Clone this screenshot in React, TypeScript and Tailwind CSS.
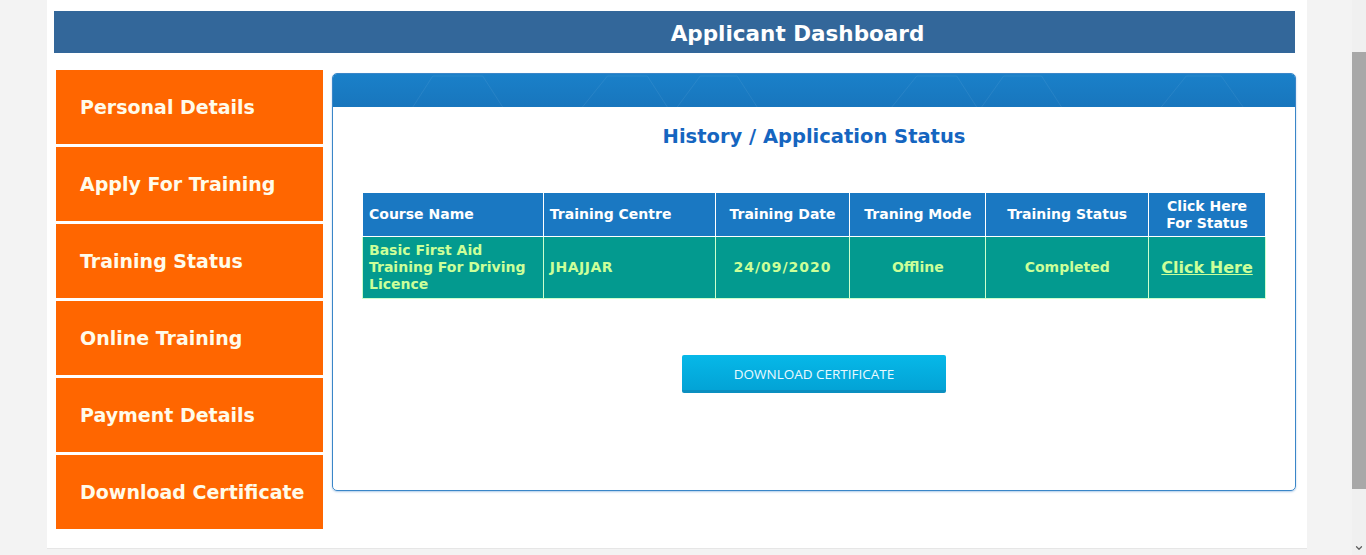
import { ChevronDown } from 'lucide-react'

const menu = [
  'Personal Details',
  'Apply For Training',
  'Training Status',
  'Online Training',
  'Payment Details',
  'Download Certificate',
]

function PanelPattern() {
  // faint hexagon-ish lines in the panel header
  return (
    <svg className="absolute inset-0 h-full w-full" preserveAspectRatio="none" viewBox="0 0 964 33">
      <g fill="none" stroke="#ffffff" strokeOpacity="0.07" strokeWidth="1">
        <path d="M80 33 L100 2 L150 2 L170 33" />
        <path d="M250 33 L275 2 L315 2 L335 33" />
        <path d="M345 33 L368 2 L405 2 L425 33" />
        <path d="M560 33 L585 2 L625 2 L645 33" />
        <path d="M650 33 L672 2 L710 2 L730 33" />
        <path d="M830 33 L855 2 L890 2 L912 33" />
      </g>
    </svg>
  )
}

export default function App() {
  return (
    <div className="flex h-[555px] w-[1366px] overflow-hidden bg-[#f3f3f3] font-['DejaVu_Sans',sans-serif]">
      <div className="ml-[47px] h-[549px] w-[1260px] border-b border-[#e6e6e6] bg-white pl-[7px] pt-[11px]">
        <div className="flex h-[42px] w-[1241px] items-center justify-center bg-[#33679a] pl-[246px] pt-[4px] text-[21.5px] font-bold text-white">
          Applicant Dashboard
        </div>

        <div className="mt-[17px] flex">
          <div className="ml-[2px] flex w-[267px] flex-col gap-[3px]">
            {menu.map(item => (
              <div
                key={item}
                className="flex h-[74px] items-center bg-[#ff6600] pl-[24px] text-[19px] font-bold text-[#fffbea]"
              >
                {item}
              </div>
            ))}
          </div>

          <div className="ml-[9px] mt-[3px] h-[418px] w-[964px] rounded-[5px] border border-[#3a86c8] shadow-[0_1px_2px_rgba(60,130,200,0.4)]">
            <div className="relative h-[33px] rounded-t-[4px] bg-gradient-to-b from-[#1a80c9] to-[#1876bd]">
              <PanelPattern />
            </div>
            <div className="flex flex-col items-center">
              <h2 className="mt-[15px] text-[19.5px] font-bold text-[#1565c0]">History / Application Status</h2>

              <table className="mt-[41px] w-[904px] border-collapse text-[14px] font-bold">
                <thead>
                  <tr className="h-[44px] bg-[#1a78c2] text-white">
                    <th className="w-[181px] border border-white px-[6px] text-left">Course Name</th>
                    <th className="w-[172px] border border-white px-[6px] text-left">Training Centre</th>
                    <th className="w-[135px] border border-white text-center">Training Date</th>
                    <th className="w-[136px] border border-white text-center">Traning Mode</th>
                    <th className="w-[163px] border border-white text-center">Training Status</th>
                    <th className="w-[117px] border border-white text-center leading-[17px]">
                      Click Here
                      <br />
                      For Status
                    </th>
                  </tr>
                </thead>
                <tbody>
                  <tr className="h-[62px] bg-[#039a8f] pt-[2px] text-[#ccff99]">
                    <td className="border border-[#ccffcc] px-[6px] leading-[17px]">
                      Basic First Aid Training For Driving Licence
                    </td>
                    <td className="border border-[#ccffcc] px-[6px] tracking-[0.5px]">JHAJJAR</td>
                    <td className="border border-[#ccffcc] text-center tracking-[1px]">24/09/2020</td>
                    <td className="border border-[#ccffcc] text-center">Offline</td>
                    <td className="border border-[#ccffcc] text-center">Completed</td>
                    <td className="border border-[#ccffcc] text-center">
                      <a className="text-[16px] underline">Click Here</a>
                    </td>
                  </tr>
                </tbody>
              </table>

              <button className="mt-[56px] h-[38px] w-[264px] rounded-[2px] border-b-[3px] border-[#0b8fc0] bg-gradient-to-b from-[#07b8e8] to-[#03a3d6] pt-[3px] font-['Open_Sans',sans-serif] text-[13.5px] text-[#eafaff]">
                DOWNLOAD CERTIFICATE
              </button>
            </div>
          </div>
        </div>
      </div>

      <div className="ml-[45px] flex h-[555px] w-[14px] flex-col bg-[#f0f0f0]">
        <div className="h-[52px]" />
        <div className="h-[437px] bg-[#a8a8a8]" />
        <div className="flex-1" />
        <div className="flex h-[14px] items-center justify-center text-[#606060]">
          <ChevronDown size={10} strokeWidth={3} />
        </div>
      </div>
    </div>
  )
}
